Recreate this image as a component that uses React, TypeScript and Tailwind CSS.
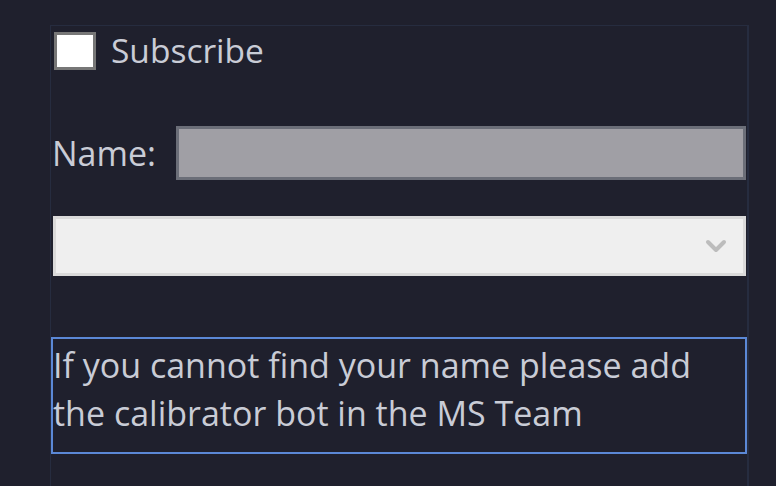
import { ChevronDown } from 'lucide-react';

export default function App() {
  return (
    <div
      className="h-[486px] w-[776px] overflow-hidden bg-[#1f202d] pl-[50px] pt-[25px] text-[#c9ccd6]"
      style={{ fontFamily: '"Open Sans", "Noto Sans", sans-serif' }}
    >
      <div className="flex h-[480px] w-[699px] flex-col border-l border-t border-r-2 border-[#262c3f]">
        <label className="flex h-[48px] items-center gap-[15px] pl-[3px] pt-[1px]">
          <span className="h-[38px] w-[42px] border-[3px] border-[#777777] bg-white" />
          <span className="text-[33.5px] leading-none">Subscribe</span>
        </label>

        <div className="mt-[52px] flex items-center pr-[1px]">
          <span className="pl-[1px] text-[34px] leading-none">Name:</span>
          <div className="ml-auto h-[54px] w-[570px] border-[3px] border-[#6b6e78] bg-[#a09fa5]" />
        </div>

        <div className="mt-[36px] mr-[1px] ml-[2px] flex h-[60px] items-center justify-end border-[3px] border-[#dadada] bg-[#efefef] pr-[11px]">
          <ChevronDown className="h-[32px] w-[32px] text-[#bcbcbc]" strokeWidth={3} />
        </div>

        <div className="mt-[61px] h-[117px] border-2 border-[#5b88d6] pl-0 pt-[2px] text-[34px] leading-[48px]">
          If you cannot find your name please add the calibrator bot in the MS Team
        </div>
      </div>
    </div>
  );
}
